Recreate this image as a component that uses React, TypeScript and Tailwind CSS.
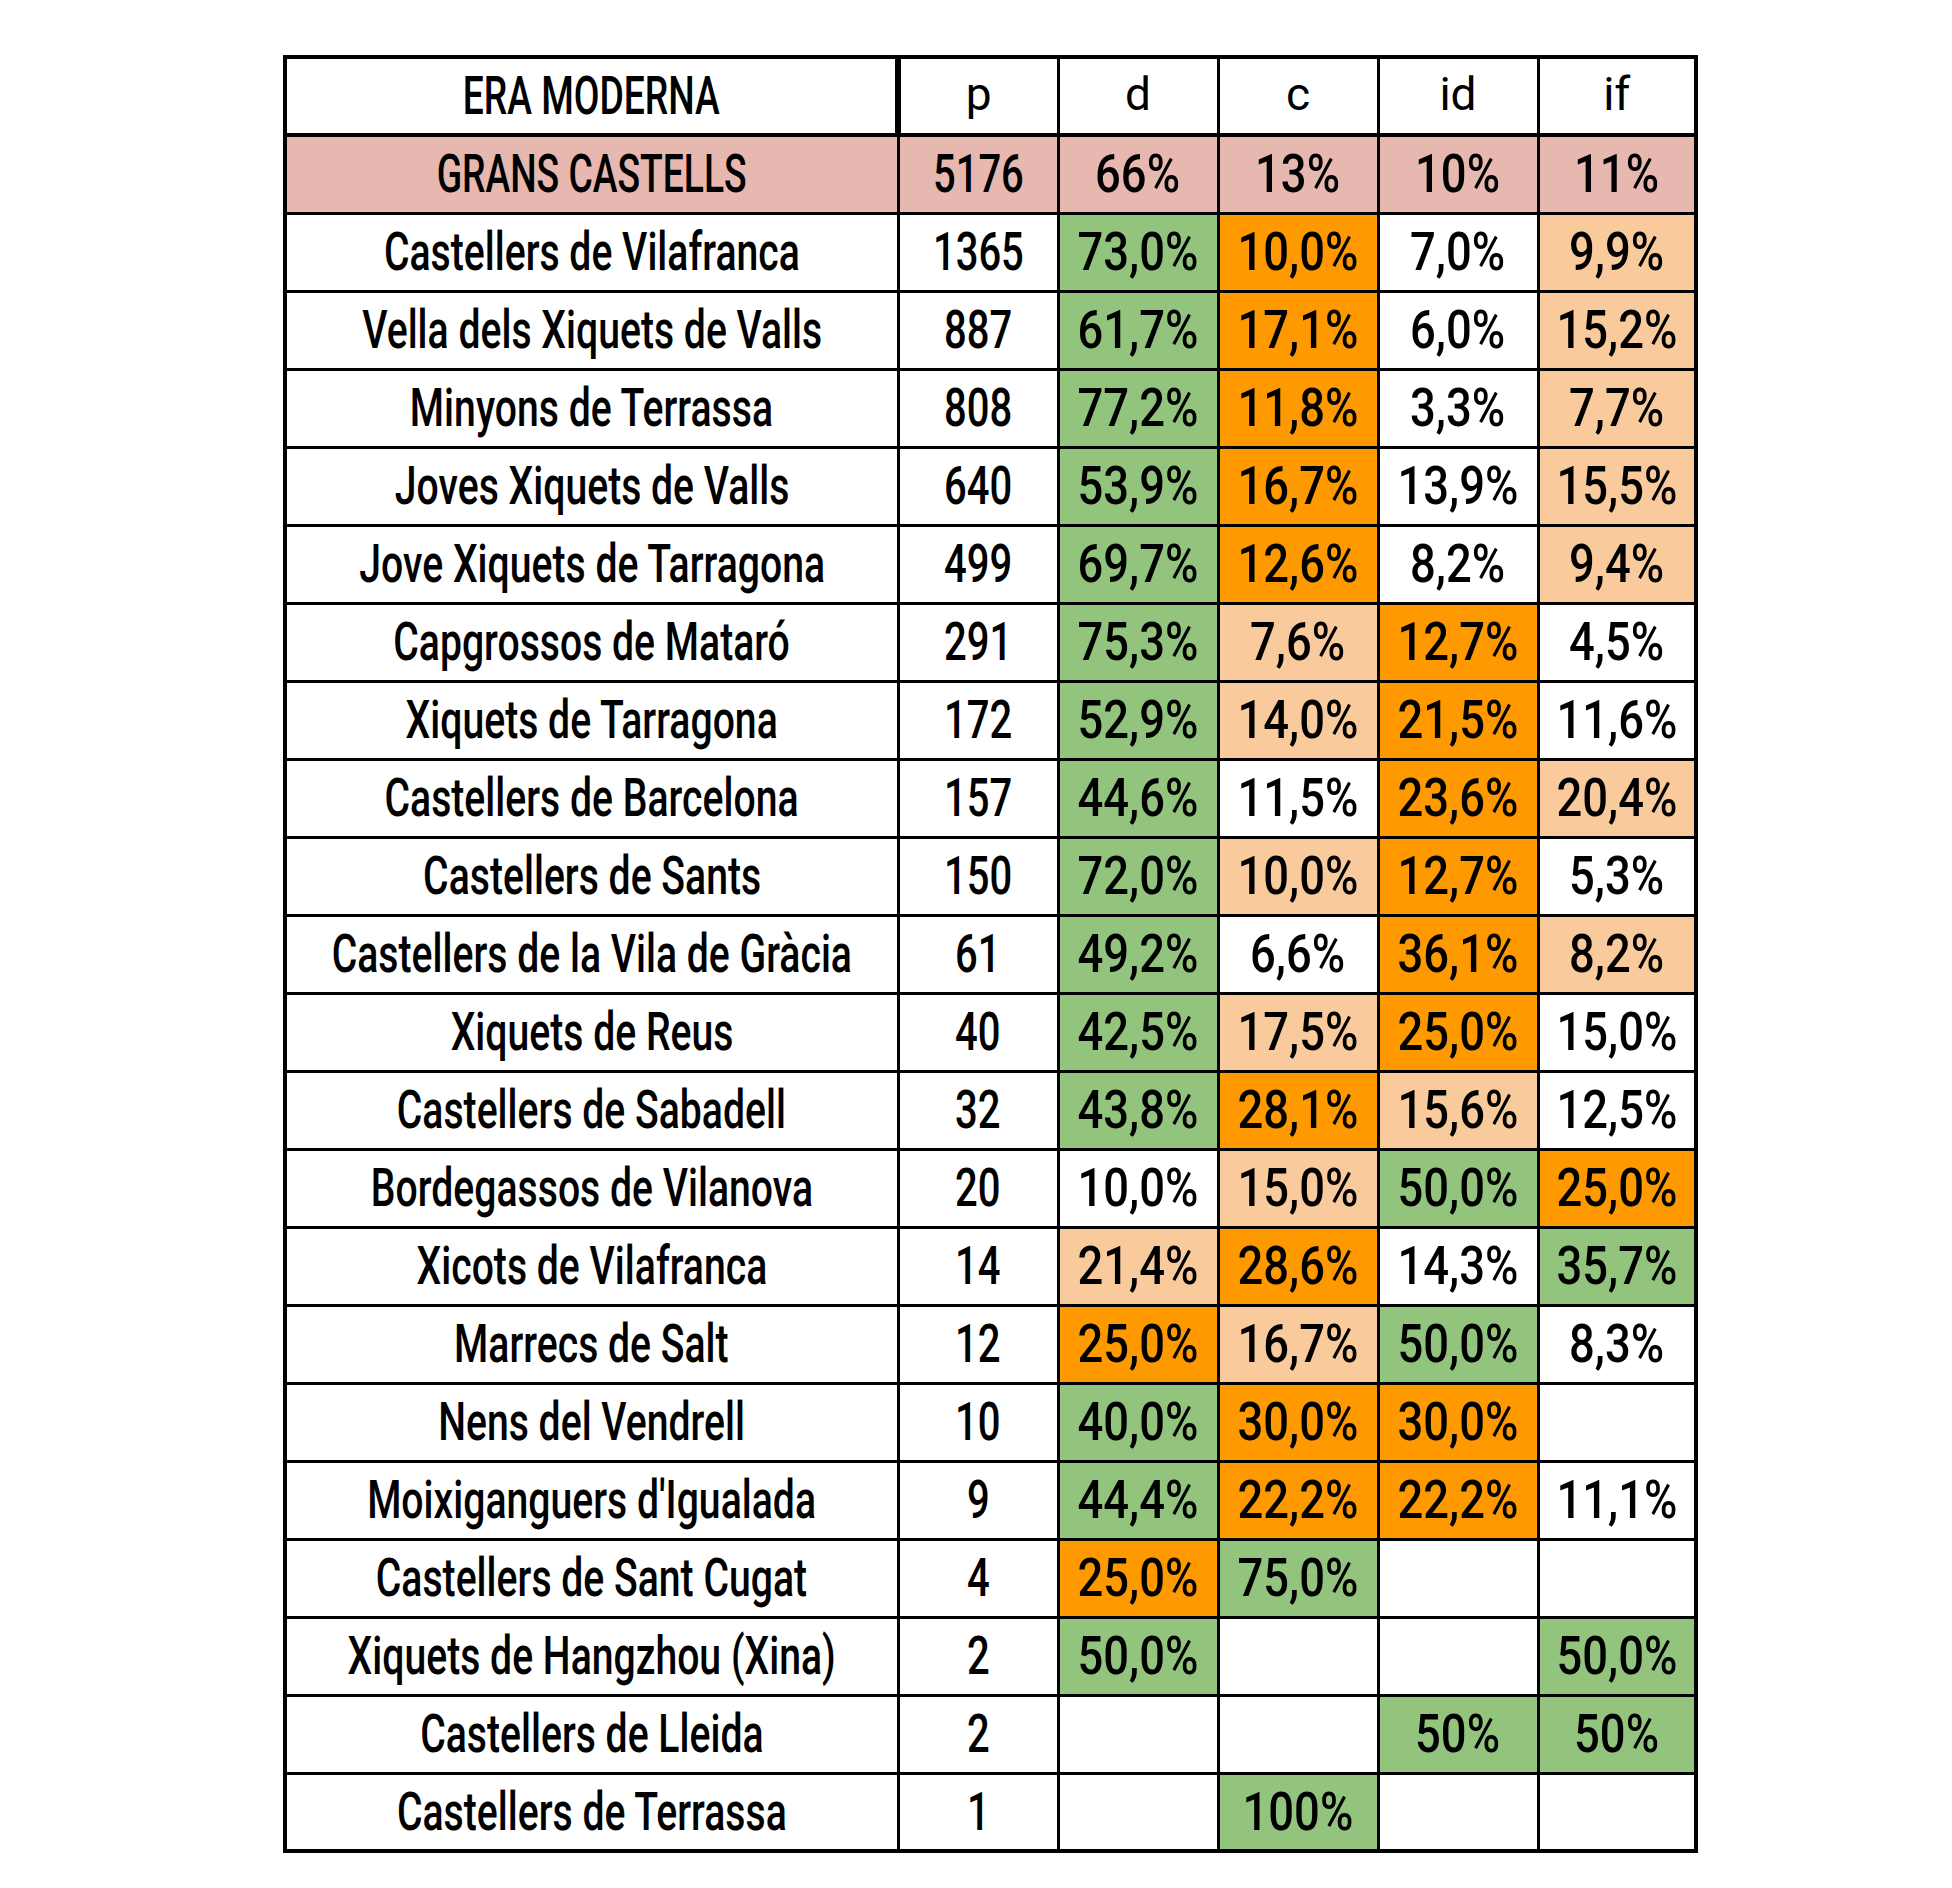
const G = 'bg-[#93c47d]';
const O = 'bg-[#ff9900]';
const L = 'bg-[#f9cb9c]';
const W = 'bg-white';

type Cell = [string, string];

const ROWS: { name: string; p: string; cells: Cell[] }[] = [
  { name: 'Castellers de Vilafranca', p: '1365', cells: [['73,0%', G], ['10,0%', O], ['7,0%', W], ['9,9%', L]] },
  { name: 'Vella dels Xiquets de Valls', p: '887', cells: [['61,7%', G], ['17,1%', O], ['6,0%', W], ['15,2%', L]] },
  { name: 'Minyons de Terrassa', p: '808', cells: [['77,2%', G], ['11,8%', O], ['3,3%', W], ['7,7%', L]] },
  { name: 'Joves Xiquets de Valls', p: '640', cells: [['53,9%', G], ['16,7%', O], ['13,9%', W], ['15,5%', L]] },
  { name: 'Jove Xiquets de Tarragona', p: '499', cells: [['69,7%', G], ['12,6%', O], ['8,2%', W], ['9,4%', L]] },
  { name: 'Capgrossos de Mataró', p: '291', cells: [['75,3%', G], ['7,6%', L], ['12,7%', O], ['4,5%', W]] },
  { name: 'Xiquets de Tarragona', p: '172', cells: [['52,9%', G], ['14,0%', L], ['21,5%', O], ['11,6%', W]] },
  { name: 'Castellers de Barcelona', p: '157', cells: [['44,6%', G], ['11,5%', W], ['23,6%', O], ['20,4%', L]] },
  { name: 'Castellers de Sants', p: '150', cells: [['72,0%', G], ['10,0%', L], ['12,7%', O], ['5,3%', W]] },
  { name: 'Castellers de la Vila de Gràcia', p: '61', cells: [['49,2%', G], ['6,6%', W], ['36,1%', O], ['8,2%', L]] },
  { name: 'Xiquets de Reus', p: '40', cells: [['42,5%', G], ['17,5%', L], ['25,0%', O], ['15,0%', W]] },
  { name: 'Castellers de Sabadell', p: '32', cells: [['43,8%', G], ['28,1%', O], ['15,6%', L], ['12,5%', W]] },
  { name: 'Bordegassos de Vilanova', p: '20', cells: [['10,0%', W], ['15,0%', L], ['50,0%', G], ['25,0%', O]] },
  { name: 'Xicots de Vilafranca', p: '14', cells: [['21,4%', L], ['28,6%', O], ['14,3%', W], ['35,7%', G]] },
  { name: 'Marrecs de Salt', p: '12', cells: [['25,0%', O], ['16,7%', L], ['50,0%', G], ['8,3%', W]] },
  { name: 'Nens del Vendrell', p: '10', cells: [['40,0%', G], ['30,0%', O], ['30,0%', O], ['', W]] },
  { name: "Moixiganguers d'Igualada", p: '9', cells: [['44,4%', G], ['22,2%', O], ['22,2%', O], ['11,1%', W]] },
  { name: 'Castellers de Sant Cugat', p: '4', cells: [['25,0%', O], ['75,0%', G], ['', W], ['', W]] },
  { name: 'Xiquets de Hangzhou (Xina)', p: '2', cells: [['50,0%', G], ['', W], ['', W], ['50,0%', G]] },
  { name: 'Castellers de Lleida', p: '2', cells: [['', W], ['', W], ['50%', G], ['50%', G]] },
  { name: 'Castellers de Terrassa', p: '1', cells: [['', W], ['100%', G], ['', W], ['', W]] },
];

const narrow = "font-['Roboto','Liberation_Sans',sans-serif] font-medium text-[54px] leading-none whitespace-nowrap";
const td = 'border-[3px] border-black h-[78px] p-0 text-center align-middle';

// condensed look: squeeze Roboto horizontally, a bit more for caps than for figures
function squeeze(text: string) {
  if (text.includes('%')) return 'scale-x-[0.84]';
  if (/^\d+$/.test(text)) return 'scale-x-[0.74]';
  if (text === text.toUpperCase()) return 'scale-x-[0.69]';
  return 'scale-x-[0.725]';
}

function T({ children }: { children: string }) {
  return (
    <div className="flex justify-center">
      <span className={`inline-block shrink-0 ${squeeze(children)}`}>{children}</span>
    </div>
  );
}

export default function App() {
  return (
    <div className="min-h-screen bg-white pt-[55px] pl-[283px] text-black">
      <table className={`border-collapse border-4 border-black table-fixed w-[1411px] ${narrow}`}>
        <colgroup>
          <col className="w-[613px]" />
          <col className="w-[160px]" />
          <col className="w-[160px]" />
          <col className="w-[160px]" />
          <col className="w-[160px]" />
          <col className="w-[158px]" />
        </colgroup>
        <thead>
          <tr>
            <td className={`${td} border-b-4 border-r-[6px]`}><T>ERA MODERNA</T></td>
            {['p', 'd', 'c', 'id', 'if'].map((h) => (
              <td key={h} className={`${td} border-b-4 font-normal text-[46px]`}>
                <span className="inline-block pb-[4px]">{h}</span>
              </td>
            ))}
          </tr>
        </thead>
        <tbody>
          <tr className="bg-[#e6b8af]">
            <td className={td}><T>GRANS CASTELLS</T></td>
            {['5176', '66%', '13%', '10%', '11%'].map((v) => (
              <td key={v} className={td}><T>{v}</T></td>
            ))}
          </tr>
          {ROWS.map((r) => (
            <tr key={r.name}>
              <td className={td}><T>{r.name}</T></td>
              <td className={td}><T>{r.p}</T></td>
              {r.cells.map(([v, bg], i) => (
                <td key={i} className={`${td} ${bg}`}>{v && <T>{v}</T>}</td>
              ))}
            </tr>
          ))}
        </tbody>
      </table>
    </div>
  );
}
